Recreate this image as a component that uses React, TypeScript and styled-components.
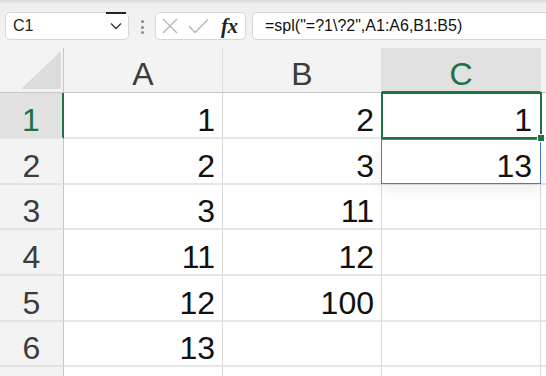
import React from 'react'
import styled, { createGlobalStyle, css } from 'styled-components'

const GlobalStyle = createGlobalStyle`
  html, body {
    margin: 0;
    padding: 0;
    background: #ffffff;
    font-family: "Liberation Sans", Arial, sans-serif;
    overflow: hidden;
  }
`

const green = '#1e7145'
const blue = '#4a78cf'

const Page = styled.div`
  width: 546px;
  height: 376px;
  overflow: hidden;
  display: flex;
  flex-direction: column;
`

const Toolbar = styled.div`
  height: 48px;
  flex: none;
  box-sizing: border-box;
  padding: 12px 0 0 5px;
  display: flex;
  align-items: flex-start;
  background: linear-gradient(#d9d9d9 0, #efefef 4px, #f3f3f3 100%);
`

const NameBox = styled.div`
  position: relative;
  width: 124px;
  height: 28px;
  box-sizing: border-box;
  border: 1px solid #d6d6d6;
  border-radius: 5px;
  background: #fff;
  display: flex;
  align-items: center;
  justify-content: space-between;
  padding: 0 6px 0 7px;
  font-size: 16px;
  color: #222;

  &::before {
    content: '';
    position: absolute;
    top: -1px;
    right: 2px;
    width: 20px;
    height: 1.5px;
    background: #222;
  }
`

const Grip = styled.div`
  width: 3px;
  margin: 8px 11px 0 12px;
  display: flex;
  flex-direction: column;
  gap: 2.5px;

  span {
    width: 3px;
    height: 3px;
    border-radius: 50%;
    background: #8a8a8a;
  }
`

const FuncBox = styled.div`
  width: 91px;
  height: 28px;
  box-sizing: border-box;
  border: 1px solid #d6d6d6;
  border-radius: 5px;
  background: #fff;
  display: flex;
  align-items: center;
  padding: 0 6px 0 6px;
  gap: 10px;
`

const Fx = styled.span`
  font-family: "Liberation Serif", "Times New Roman", serif;
  font-style: italic;
  font-weight: bold;
  font-size: 21px;
  color: #222;
  margin-left: 2px;
  letter-spacing: -0.5px;
`

const FormulaBox = styled.div`
  flex: 1;
  height: 28px;
  margin-left: 6px;
  box-sizing: border-box;
  border: 1px solid #d6d6d6;
  border-right: none;
  border-radius: 5px 0 0 5px;
  background: #fff;
  display: flex;
  align-items: center;
  padding-left: 12px;
  font-size: 16px;
  color: #111;
  white-space: nowrap;
`

const Sheet = styled.div`
  flex: 1;
  display: grid;
  grid-template-columns: 64px 159px 159px 159px 1fr;
  grid-template-rows: 45px 46px 46px 45px 46px 46px 45px 46px;
`

const Corner = styled.div`
  background: #f3f3f3;
  border-bottom: 1px solid #c6c6c6;
  border-right: 1px solid #c6c6c6;
  box-sizing: border-box;
  display: flex;
  align-items: flex-end;
  justify-content: flex-end;
  padding: 0 2px 3px 0;
`

const ColHeader = styled.div<{ $active?: boolean }>`
  box-sizing: border-box;
  background: #f3f3f3;
  border-right: 1px solid #dedede;
  border-bottom: 1px solid #c6c6c6;
  display: flex;
  align-items: flex-end;
  justify-content: center;
  padding-bottom: 2px;
  font-size: 32px;
  line-height: 32px;
  color: #3c3c3c;
  ${(p) =>
    p.$active &&
    css`
      background: #e1e1e1;
      color: ${green};
      border-bottom: 2px solid ${green};
      padding-bottom: 1px;
    `}
`

const RowHeader = styled.div<{ $active?: boolean }>`
  box-sizing: border-box;
  background: #f3f3f3;
  border-right: 1px solid #c6c6c6;
  border-bottom: 2px solid #e3e3e3;
  display: flex;
  align-items: flex-end;
  justify-content: center;
  padding-bottom: 1px;
  font-size: 32px;
  line-height: 32px;
  color: #3c3c3c;
  ${(p) =>
    p.$active &&
    css`
      background: #e1e1e1;
      color: ${green};
      border-right: 2px solid ${green};
    `}
`

const Cell = styled.div<{ $selected?: boolean; $spill?: boolean }>`
  position: relative;
  box-sizing: border-box;
  background: #fff;
  border-right: 1px solid #dadada;
  border-bottom: 2px solid #e6e6e6;
  display: flex;
  align-items: flex-end;
  justify-content: flex-end;
  padding: 0 7px 1px 0;
  font-size: 32px;
  line-height: 32px;
  color: #111;

  ${(p) =>
    p.$selected &&
    css`
      padding-right: 8px;
      &::after {
        content: '';
        position: absolute;
        top: -1px;
        left: -1px;
        right: -2px;
        bottom: -2px;
        border: 2px solid ${green};
        z-index: 2;
      }
      &::before {
        content: '';
        position: absolute;
        right: -5px;
        bottom: -5px;
        width: 6px;
        height: 6px;
        background: ${green};
        border: 1px solid #fff;
        z-index: 3;
      }
    `}

  ${(p) =>
    p.$spill &&
    css`
      padding-right: 8px;
      &::after {
        content: '';
        position: absolute;
        top: 0;
        left: -1px;
        right: -1px;
        bottom: -1px;
        border: 1px solid ${blue};
        box-shadow: 0 6px 12px rgba(0, 0, 0, 0.07);
        z-index: 1;
      }
    `}
`

const columns = ['A', 'B', 'C', '']

const rows: { a: string; b: string; c: string }[] = [
  { a: '1', b: '2', c: '1' },
  { a: '2', b: '3', c: '13' },
  { a: '3', b: '11', c: '' },
  { a: '11', b: '12', c: '' },
  { a: '12', b: '100', c: '' },
  { a: '13', b: '', c: '' },
  { a: '', b: '', c: '' },
]

const Cross = () => (
  <svg width="16" height="16" viewBox="0 0 16 16">
    <path d="M1 1 L15 15 M15 1 L1 15" stroke="#b4b4b4" strokeWidth="1.3" fill="none" />
  </svg>
)

const Check = () => (
  <svg width="21" height="16" viewBox="0 0 21 16">
    <path d="M1 8 L7 14.5 L20 1.5" stroke="#b4b4b4" strokeWidth="1.3" fill="none" />
  </svg>
)

const Chevron = () => (
  <svg width="12" height="8" viewBox="0 0 12 8">
    <path d="M1 1.5 L6 6.5 L11 1.5" stroke="#333" strokeWidth="1.3" fill="none" />
  </svg>
)

const CornerMark = () => (
  <svg width="40" height="38" viewBox="0 0 40 38">
    <polygon points="40,0 40,38 0,38" fill="#dcdcdc" />
  </svg>
)

const App = () => (
  <Page>
    <GlobalStyle />
    <Toolbar>
      <NameBox>
        <span>C1</span>
        <Chevron />
      </NameBox>
      <Grip>
        <span />
        <span />
        <span />
      </Grip>
      <FuncBox>
        <Cross />
        <Check />
        <Fx>fx</Fx>
      </FuncBox>
      <FormulaBox>=spl("=?1\?2",A1:A6,B1:B5)</FormulaBox>
    </Toolbar>
    <Sheet>
      <Corner>
        <CornerMark />
      </Corner>
      {columns.map((col) => (
        <ColHeader key={col || 'D'} $active={col === 'C'}>
          {col}
        </ColHeader>
      ))}
      {rows.map((row, i) => (
        <React.Fragment key={i}>
          <RowHeader $active={i === 0}>{i < 6 ? i + 1 : ''}</RowHeader>
          <Cell>{row.a}</Cell>
          <Cell>{row.b}</Cell>
          <Cell $selected={i === 0} $spill={i === 1}>
            {row.c}
          </Cell>
          <Cell />
        </React.Fragment>
      ))}
    </Sheet>
  </Page>
)

export default App
